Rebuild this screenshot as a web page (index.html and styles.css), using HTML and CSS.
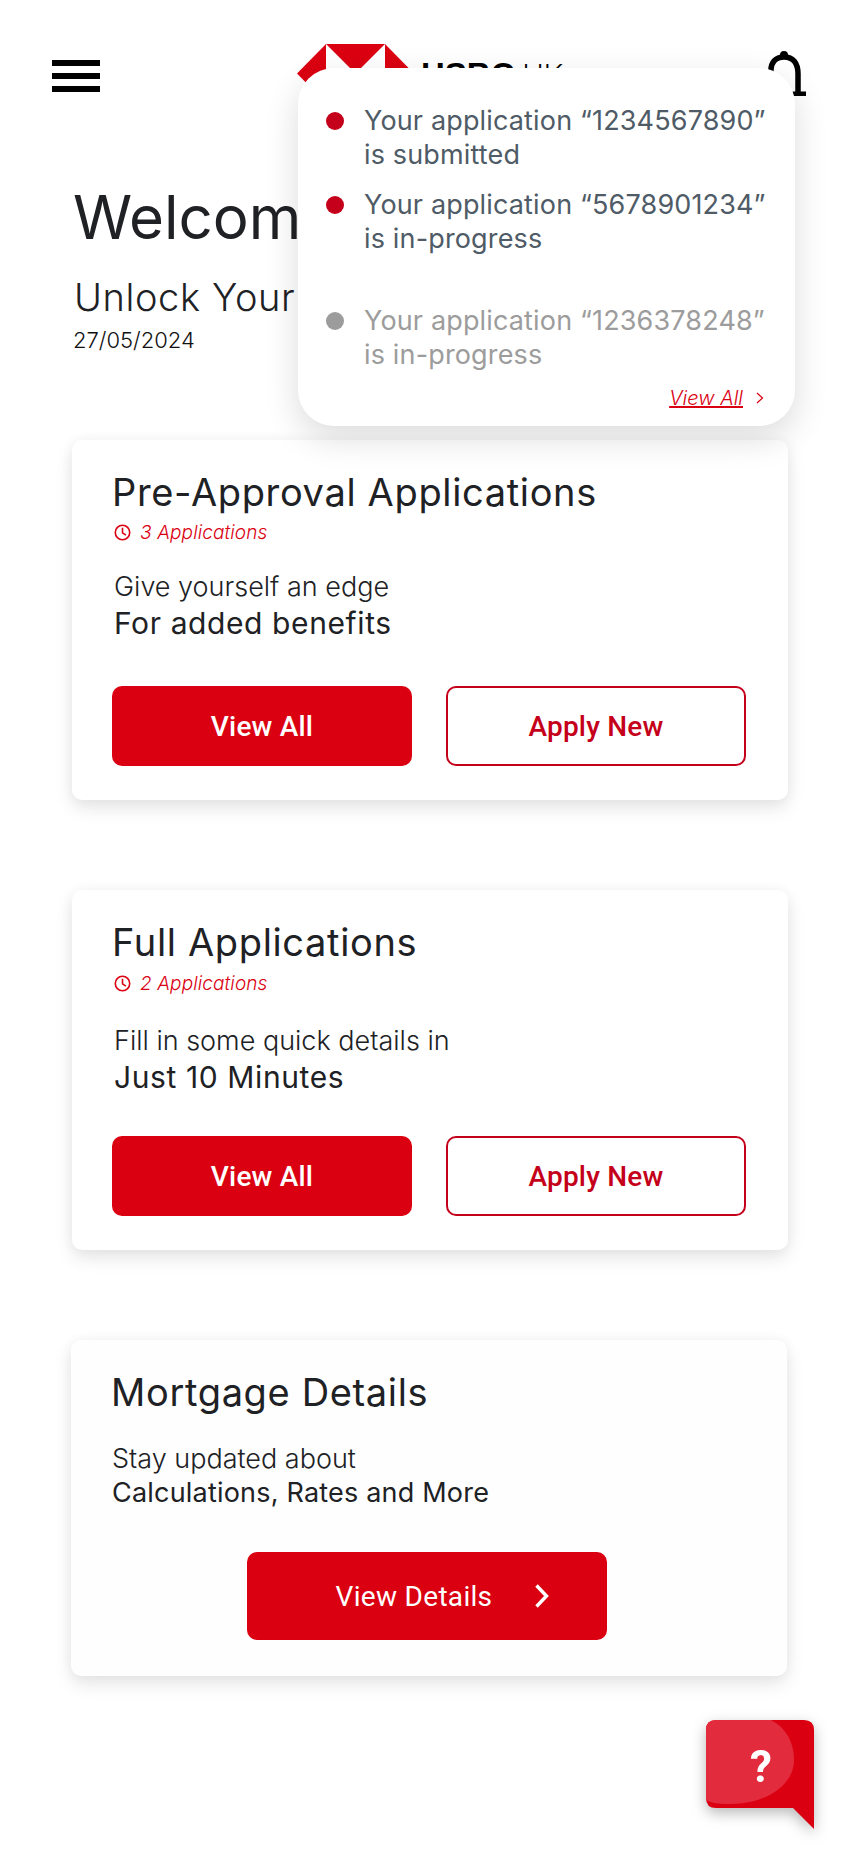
FILE: index.html
```html
<!DOCTYPE html>
<html lang="en">
<head>
<meta charset="utf-8">
<title>HSBC UK</title>
<link rel="stylesheet" href="styles.css">
</head>
<body>
<div class="page">

  <header class="topbar">
    <div class="burger"><span></span><span></span><span></span></div>
    <div class="brand">
      <svg class="brand-logo" viewBox="0 0 118 60" width="118" height="60">
        <polygon fill="#db0011" points="29,0 88,0 58.5,29.500"/>
        <polygon fill="#db0011" points="29,0 0,29.500 29,59"/>
        <polygon fill="#db0011" points="88,0 117,29.500 88,59"/>
        <polygon fill="#db0011" points="29,59 88,59 58.5,29.500"/>
      </svg>
      <span class="brand-name">HSBC</span><span class="brand-region">UK</span>
    </div>
    <svg class="bell" viewBox="0 0 38 46" width="38" height="46">
      <circle cx="16" cy="5" r="4" fill="#000"/>
      <path d="M3 23 C2 12 8 7 16 7 C25 7 30 13 30 24 L30 42" fill="none" stroke="#000" stroke-width="5.500"/>
      <path d="M21 44 H38" stroke="#000" stroke-width="5" fill="none"/>
    </svg>
  </header>

  <section class="hero">
    <h1>Welcom</h1>
    <p class="hero-sub">Unlock Your</p>
    <p class="hero-date">27/05/2024</p>
  </section>

  <div class="notices">
    <div class="notice notice-first">
      <i class="dot"></i>
      <p>Your application “1234567890”<br>is submitted</p>
    </div>
    <div class="notice notice-second">
      <i class="dot"></i>
      <p>Your application “5678901234”<br>is in-progress</p>
    </div>
    <div class="notice notice-read">
      <i class="dot"></i>
      <p>Your application “1236378248”<br>is in-progress</p>
    </div>
    <div class="notices-foot">
      <a href="#">View All</a>
      <svg viewBox="0 0 10 14" width="10" height="14"><path d="M2 2 L7.500 7 L2 12" fill="none" stroke="#db0011" stroke-width="1.200"/></svg>
    </div>
  </div>

  <main class="cards">
    <section class="card card-pre">
      <h2>Pre-Approval Applications</h2>
      <div class="card-meta">
        <svg viewBox="0 0 16 16" width="17" height="17"><circle cx="8" cy="8" r="6.800" fill="none" stroke="#db0011" stroke-width="1.500"/><path d="M8 3.500 V8.300 L11.200 10.500" fill="none" stroke="#db0011" stroke-width="1.500"/></svg>
        <span>3 Applications</span>
      </div>
      <p class="card-lead">Give yourself an edge</p>
      <p class="card-strong">For added benefits</p>
      <div class="card-actions">
        <a class="btn btn-solid" href="#">View All</a>
        <a class="btn btn-line" href="#">Apply New</a>
      </div>
    </section>

    <section class="card card-full">
      <h2>Full Applications</h2>
      <div class="card-meta">
        <svg viewBox="0 0 16 16" width="17" height="17"><circle cx="8" cy="8" r="6.800" fill="none" stroke="#db0011" stroke-width="1.500"/><path d="M8 3.500 V8.300 L11.200 10.500" fill="none" stroke="#db0011" stroke-width="1.500"/></svg>
        <span>2 Applications</span>
      </div>
      <p class="card-lead">Fill in some quick details in</p>
      <p class="card-strong">Just 10 Minutes</p>
      <div class="card-actions">
        <a class="btn btn-solid" href="#">View All</a>
        <a class="btn btn-line" href="#">Apply New</a>
      </div>
    </section>

    <section class="card card-plain">
      <h2>Mortgage Details</h2>
      <p class="card-lead">Stay updated about</p>
      <p class="card-strong">Calculations, Rates and More</p>
      <a class="btn btn-solid btn-wide" href="#">
        View Details
        <svg viewBox="0 0 16 24" width="16" height="24"><path d="M2.500 1.500 L12.500 12 L2.500 22.500" fill="none" stroke="#fff" stroke-width="3.400"/></svg>
      </a>
    </section>
  </main>

  <a class="help" href="#">
    <svg viewBox="0 0 108 109" width="108" height="109">
      <path d="M10 0 H98 Q108 0 108 10 V109 L87 88 H10 Q0 88 0 78 V10 Q0 0 10 0 Z" fill="#db0011"/>
      <path d="M10 0 H65 C80 8 88 22 88 40 C88 65 60 84 25 84 C15 84 7 84 0 80 V10 Q0 0 10 0 Z" fill="#e32b3e"/>
    </svg>
    <span>?</span>
  </a>

</div>
</body>
</html>
```

FILE: styles.css
```css
* { box-sizing: border-box; }
body {
  margin: 0;
  background: #fff;
  font-family: Inter, Roboto, "Liberation Sans", sans-serif;
  color: #202124;
}
p, h1, h2 { margin: 0; font-weight: 400; }
a { text-decoration: none; }

.page {
  position: relative;
  width: 860px;
  height: 1864px;
  overflow: hidden;
}

/* top bar */
.topbar {
  display: flex;
  align-items: flex-start;
  height: 181px;
  padding: 44px 53px 0 52px;
}
.burger {
  display: flex;
  flex-direction: column;
  justify-content: space-between;
  width: 48px;
  height: 32px;
  margin-top: 16px;
}
.burger span { display: block; height: 6px; background: #000; }
.brand {
  display: flex;
  align-items: flex-start;
  margin-left: 197px;
}
.brand-name {
  margin-left: 6px;
  margin-top: 11px;
  font: 700 33px/40px "Liberation Sans", sans-serif;
  color: #000;
}
.brand-region {
  margin-left: 8px;
  margin-top: 11px;
  font: 300 32px/40px Roboto, sans-serif;
  color: #000;
}
.bell { margin-left: auto; margin-top: 6px; margin-right: 1px; }

.hero { padding-left: 73px; height: 259px; white-space: nowrap; }
.hero h1 {
  font-size: 60px;
  line-height: 72px;
  color: #202124;
}
.hero-sub {
  margin-top: 20px;
  padding-left: 1px;
  font-size: 38px;
  line-height: 48px;
  font-weight: 300;
  letter-spacing: 0.6px;
}
.hero-date { margin-top: 5px; font-size: 22px; line-height: 28px; font-weight: 300; color: #111; }

/* notifications popover */
.notices {
  position: absolute;
  left: 298px;
  top: 68px;
  width: 497px;
  height: 358px;
  padding: 36px 25px 0 28px;
  background: #fff;
  border-radius: 36px;
  box-shadow: 0 12px 34px rgba(0, 0, 0, 0.14);
}
.notice {
  display: flex;
  gap: 20px;
  font-size: 27px;
  line-height: 34px;
  letter-spacing: 0.15px;
  color: #4f5b66;
  white-space: nowrap;
}
.notice-second { margin-top: 16px; }
.notice-read { margin-top: 48px; color: #9c9c9c; }
.dot {
  flex: none;
  width: 18px;
  height: 18px;
  margin-top: 8px;
  border-radius: 50%;
  background: #c4001a;
}
.notice-read .dot { background: #9c9c9c; }
.notices-foot {
  display: flex;
  justify-content: flex-end;
  align-items: center;
  gap: 12px;
  margin-top: 14px;
  padding-right: 5px;
  font-size: 20px;
  font-weight: 300;
  font-style: italic;
}
.notices-foot a { color: #db0011; text-decoration: underline; }

/* cards */
.cards {
  display: flex;
  flex-direction: column;
  gap: 90px;
  margin: 0 72px;
}
.card {
  height: 360px;
  padding: 29px 40px 0;
  background: #fff;
  border-radius: 10px;
  box-shadow: 0 8px 18px rgba(0, 0, 0, 0.1), 0 0 14px rgba(0, 0, 0, 0.04);
}
.card h2 { font-size: 38px; line-height: 46px; letter-spacing: 0.65px; color: #202124; }
.card-meta {
  display: flex;
  align-items: center;
  gap: 9px;
  height: 24px;
  margin-top: 5px;
  padding-left: 2px;
  font-size: 19px;
  letter-spacing: 0.1px;
  font-weight: 300;
  font-style: italic;
  color: #db0011;
}
.card-lead { margin-top: 26px; padding-left: 2px; font-size: 27px; line-height: 34px; font-weight: 300; }
.card-strong { padding-left: 2px; font-size: 30px; line-height: 38px; letter-spacing: 0.6px; }
.card-actions { display: flex; gap: 34px; margin-top: 44px; }
.card-full .card-meta { margin-top: 6px; }
.card-full .card-lead { margin-top: 29px; }
.card-full .card-actions { margin-top: 40px; }

.btn {
  display: flex;
  align-items: center;
  justify-content: center;
  width: 300px;
  height: 80px;
  border-radius: 10px;
  font-family: Roboto, sans-serif;
  font-size: 28px;
  letter-spacing: 0.2px;
  font-weight: 500;
}
.btn-solid { background: #db0011; color: #fff; }
.btn-line { background: #fff; border: 2px solid #c4001a; color: #c4001a; }

/* mortgage card has no meta line and a single wide button */
.card-plain { height: 336px; margin: 0 1px 0 -1px; background: #fefefe; }
.card-plain .card-lead { margin-top: 27px; padding-left: 1px; }
.card-plain .card-strong { padding-left: 1px; font-size: 27px; line-height: 34px; letter-spacing: 0.2px; }
.btn-wide {
  gap: 42px;
  width: 360px;
  height: 88px;
  margin: 42px 0 0 136px;
  padding-left: 32px;
  font-weight: 400;
  letter-spacing: 0.3px;
}

/* floating help bubble */
.help {
  position: absolute;
  left: 706px;
  top: 1720px;
  width: 108px;
  height: 109px;
  filter: drop-shadow(0 5px 7px rgba(0, 0, 0, 0.28));
}
.help svg { display: block; }
.help span {
  position: absolute;
  left: 44px;
  top: 21px;
  font: 700 44px/52px Roboto, sans-serif;
  color: #fff;
}
```
